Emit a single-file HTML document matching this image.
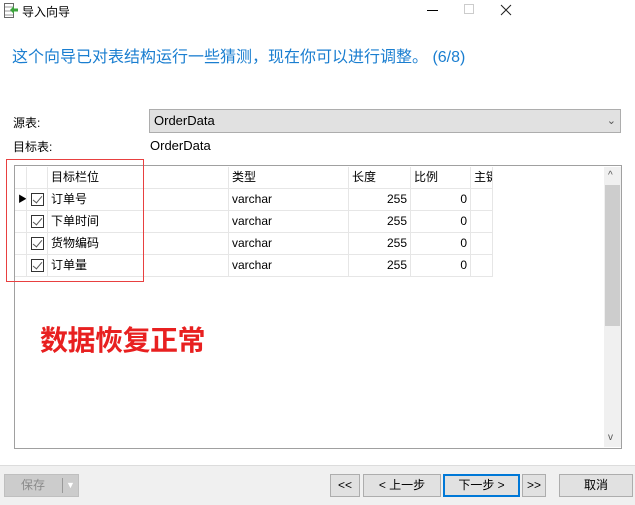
<!DOCTYPE html>
<html><head><meta charset="utf-8"><style>
*{margin:0;padding:0;box-sizing:border-box}
body{width:635px;height:505px;background:#fff;position:relative;overflow:hidden;font-family:"Liberation Sans","Noto Sans CJK SC",sans-serif;font-size:12px;color:#000}
.a{position:absolute}
.cell{position:absolute;height:22px;line-height:21px;border-right:1px solid #e6e6e6;border-bottom:1px solid #e6e6e6;padding:0 3px;white-space:nowrap;overflow:hidden}
.cb{position:absolute;width:13px;height:13px;border:1px solid #333;background:#fff}
.cb:after{content:"";position:absolute;left:3px;top:0px;width:4px;height:8px;border:solid #555;border-width:0 1.5px 1.5px 0;transform:rotate(40deg)}
.btn{position:absolute;top:474px;height:23px;border:1px solid #adadad;background:#e1e1e1;text-align:center;line-height:21px;font-size:12px}
</style></head><body>
<svg class="a" style="left:4px;top:3px" width="14" height="16"><rect x="0.5" y="0.5" width="9" height="14" fill="#fff" stroke="#666"/><line x1="1" y1="4" x2="9" y2="4" stroke="#999"/><line x1="1" y1="8" x2="9" y2="8" stroke="#999"/><line x1="1" y1="12" x2="9" y2="12" stroke="#999"/><path d="M6 7l4-4v2.5h4v3h-4V11z" fill="#3ca43c"/></svg>
<div class="a" style="left:22px;top:3px;font-size:12px">导入向导</div>
<div class="a" style="left:427px;top:10px;width:11px;height:1px;background:#000"></div>
<div class="a" style="left:464px;top:4px;width:10px;height:10px;border:1px solid #ccc"></div>
<svg class="a" style="left:500px;top:4px" width="12" height="12"><path d="M1 1L11 11M11 1L1 11" stroke="#222" stroke-width="1"/></svg>
<div class="a" style="left:12px;top:43px;font-size:16px;color:#1a7ed0">这个向导已对表结构运行一些猜测，现在你可以进行调整。 (6/8)</div>
<div class="a" style="left:13px;top:114px">源表:</div>
<div class="a" style="left:149px;top:109px;width:472px;height:24px;background:#e1e1e1;border:1px solid #adadad;padding-left:4px;line-height:22px;font-size:13px">OrderData<span style="position:absolute;right:4px;top:0;color:#555;font-size:11px">⌄</span></div>
<div class="a" style="left:13px;top:138px">目标表:</div>
<div class="a" style="left:150px;top:138px;font-size:13px">OrderData</div>
<div class="a" style="left:14px;top:165px;width:608px;height:284px;border:1px solid #a0a0a0;background:#fff">
 <div class="a" style="left:589px;top:1px;width:17px;height:280px;background:#f0f0f0"></div>
 <div class="a" style="left:590px;top:19px;width:15px;height:141px;background:#cdcdcd"></div>
 <div class="a" style="left:593px;top:4px;font-size:10px;color:#555">^</div>
 <div class="a" style="left:593px;top:266px;font-size:10px;color:#555">v</div>
</div>
<div class="a" style="left:15px;top:167px">
<div class="cell" style="left:0;top:0;width:12px"></div><div class="cell" style="left:12px;top:0;width:21px"></div>
<div class="cell" style="left:33px;top:0;width:181px">目标栏位</div><div class="cell" style="left:214px;top:0;width:120px">类型</div><div class="cell" style="left:334px;top:0;width:62px">长度</div><div class="cell" style="left:396px;top:0;width:60px">比例</div><div class="cell" style="left:456px;top:0;width:22px">主键</div>
</div>
<div class="a" style="left:15px;top:189px">
<div class="cell" style="left:0;top:0;width:12px;padding:0 0 0 3px;font-size:9px">▶</div><div class="cell" style="left:12px;top:0;width:21px"></div><div class="cb" style="left:16px;top:4px"></div><div class="cell" style="left:33px;top:0;width:181px">订单号</div><div class="cell" style="left:214px;top:0;width:120px">varchar</div><div class="cell" style="left:334px;top:0;width:62px;text-align:right">255</div><div class="cell" style="left:396px;top:0;width:60px;text-align:right">0</div><div class="cell" style="left:456px;top:0;width:22px"></div>
<div class="cell" style="left:0;top:22px;width:12px"></div><div class="cell" style="left:12px;top:22px;width:21px"></div><div class="cb" style="left:16px;top:26px"></div><div class="cell" style="left:33px;top:22px;width:181px">下单时间</div><div class="cell" style="left:214px;top:22px;width:120px">varchar</div><div class="cell" style="left:334px;top:22px;width:62px;text-align:right">255</div><div class="cell" style="left:396px;top:22px;width:60px;text-align:right">0</div><div class="cell" style="left:456px;top:22px;width:22px"></div>
<div class="cell" style="left:0;top:44px;width:12px"></div><div class="cell" style="left:12px;top:44px;width:21px"></div><div class="cb" style="left:16px;top:48px"></div><div class="cell" style="left:33px;top:44px;width:181px">货物编码</div><div class="cell" style="left:214px;top:44px;width:120px">varchar</div><div class="cell" style="left:334px;top:44px;width:62px;text-align:right">255</div><div class="cell" style="left:396px;top:44px;width:60px;text-align:right">0</div><div class="cell" style="left:456px;top:44px;width:22px"></div>
<div class="cell" style="left:0;top:66px;width:12px"></div><div class="cell" style="left:12px;top:66px;width:21px"></div><div class="cb" style="left:16px;top:70px"></div><div class="cell" style="left:33px;top:66px;width:181px">订单量</div><div class="cell" style="left:214px;top:66px;width:120px">varchar</div><div class="cell" style="left:334px;top:66px;width:62px;text-align:right">255</div><div class="cell" style="left:396px;top:66px;width:60px;text-align:right">0</div><div class="cell" style="left:456px;top:66px;width:22px"></div>
</div>
<div class="a" style="left:6px;top:159px;width:138px;height:123px;border:1px solid #e84040"></div>
<div class="a" style="left:40px;top:319px;font-size:28px;font-weight:bold;color:#e82020;letter-spacing:-0.5px">数据恢复正常</div>
<div class="a" style="left:0;top:465px;width:635px;height:40px;background:#f0f0f0;border-top:1px solid #dcdcdc"></div>
<div class="btn" style="left:4px;width:75px;background:#cccccc;border-color:#bfbfbf;color:#8a8a8a;text-align:left;padding-left:16px">保存<span style="position:absolute;left:57px;top:3px;height:15px;border-left:1px solid #999"></span><span style="position:absolute;left:61px;top:0;font-size:9px;color:#fff">▼</span></div>
<div class="btn" style="left:330px;width:30px">&lt;&lt;</div>
<div class="btn" style="left:363px;width:78px">&lt; 上一步</div>
<div class="btn" style="left:443px;width:77px;border:2px solid #0078d7;line-height:19px">下一步 &gt;</div>
<div class="btn" style="left:522px;width:24px">&gt;&gt;</div>
<div class="btn" style="left:559px;width:74px">取消</div>
</body></html>
